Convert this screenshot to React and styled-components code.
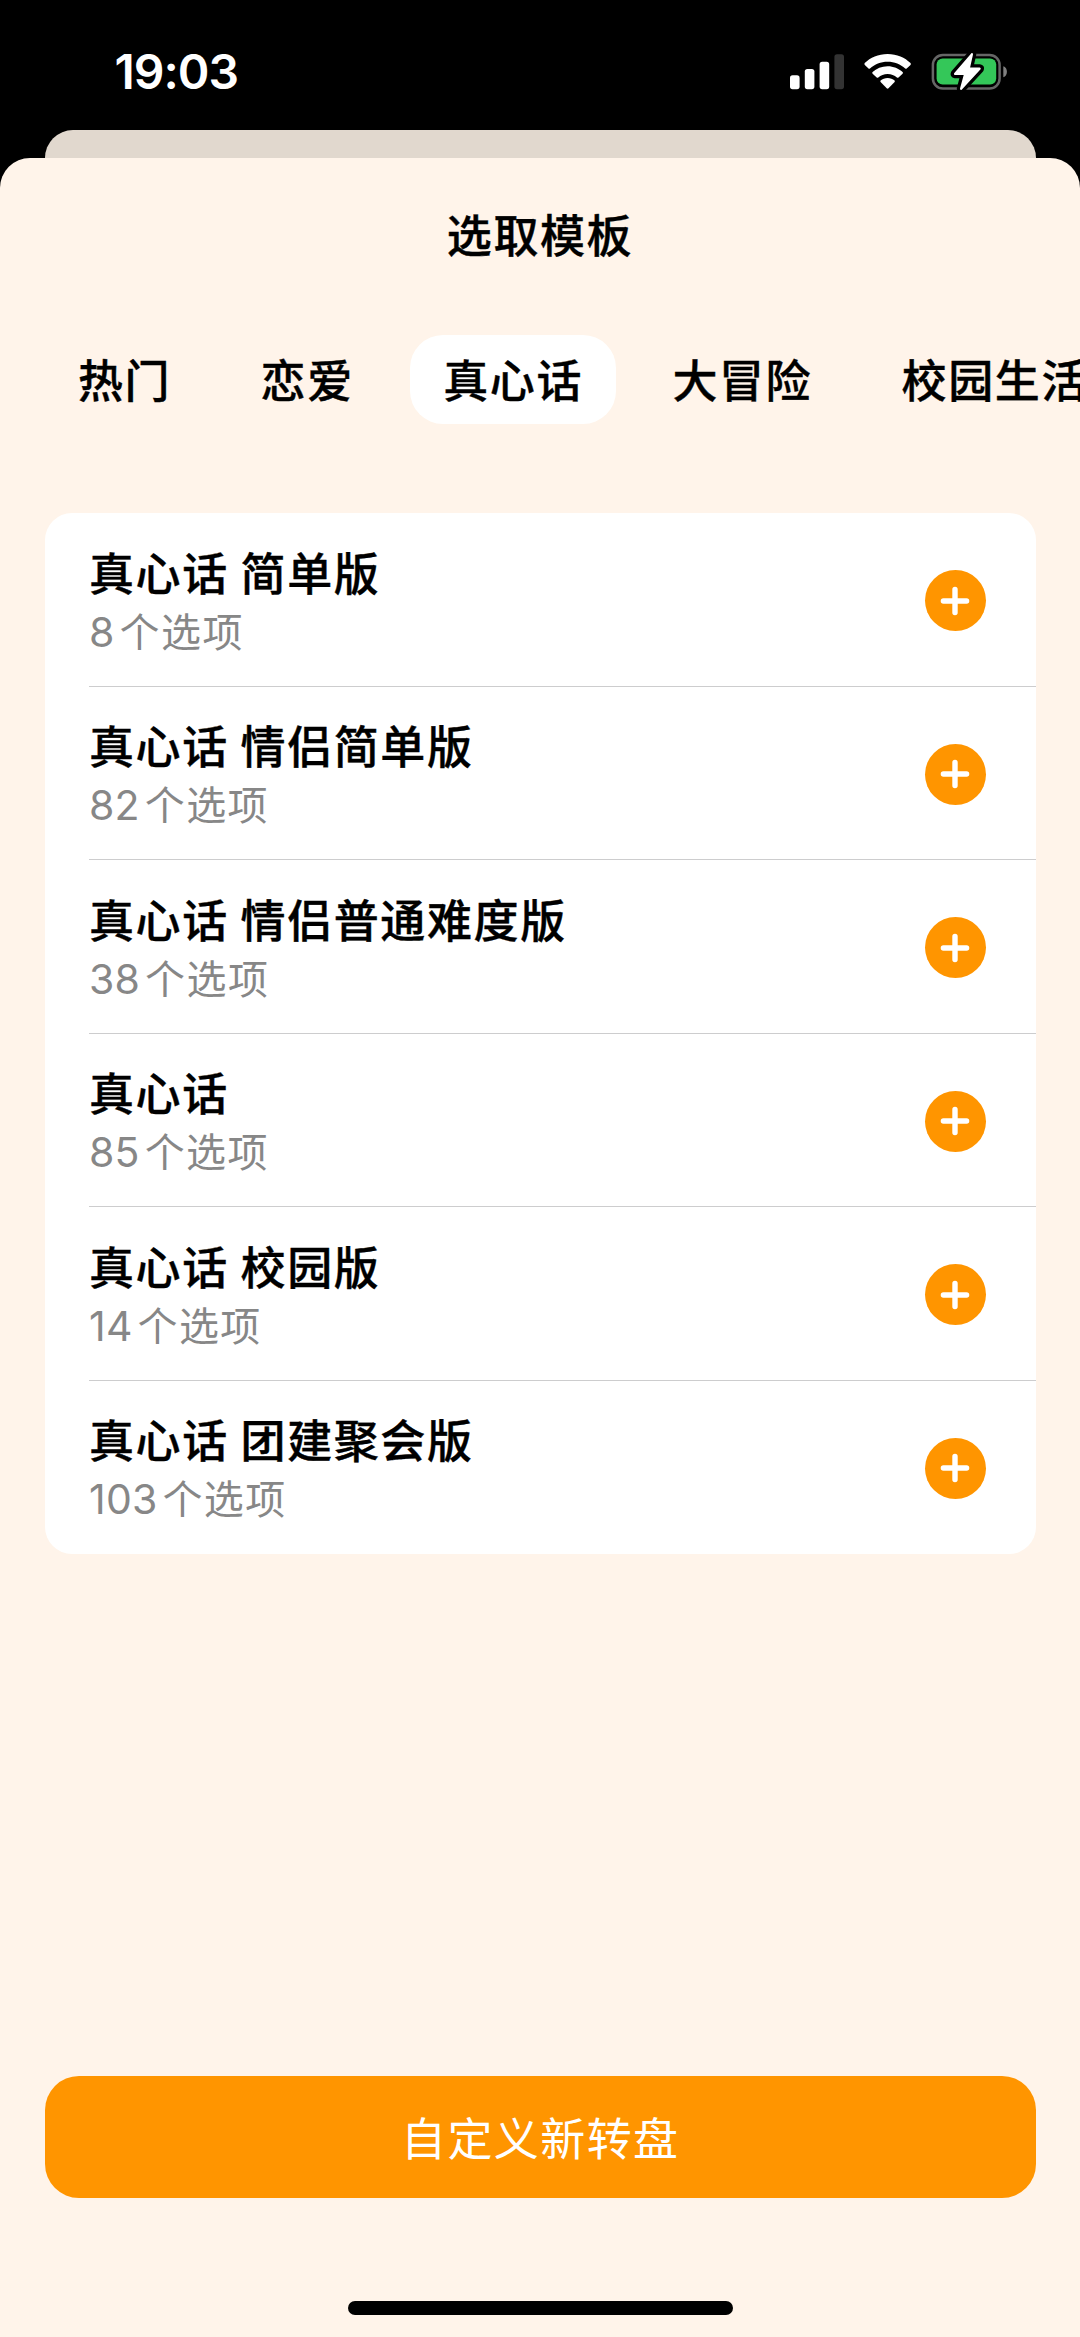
import React, { useState } from "react";
import styled, { createGlobalStyle } from "styled-components";

const TABS = ["热门", "恋爱", "真心话", "大冒险", "校园生活"];

const TEMPLATES = [
    { title: "真心话 简单版", count: 8 },
    { title: "真心话 情侣简单版", count: 82 },
    { title: "真心话 情侣普通难度版", count: 38 },
    { title: "真心话", count: 85 },
    { title: "真心话 校园版", count: 14 },
    { title: "真心话 团建聚会版", count: 103 },
];

function SignalIcon() {
    return (
        <svg width="55" height="36" viewBox="790 54 55 36" fill="#fff">
            <rect x="790" y="75.3" width="9.6" height="13.9" rx="2.6" />
            <rect x="804.8" y="69" width="9.6" height="20.2" rx="2.6" />
            <rect x="819.6" y="61.8" width="9.6" height="27.4" rx="2.6" />
            <rect x="834.4" y="54.2" width="9.6" height="35" rx="2.6" fill="#333" />
        </svg>
    );
}

function WifiIcon() {
    return (
        <svg width="48" height="36" viewBox="864 54 48 36" fill="#fff">
            <path d="M887.6 54C896.9 54 905 57.6 910.5 63.1Q911.3 64 910.5 64.9L906.7 68.5Q906 69.2 905.2 68.5C900.6 64.2 894.5 61.7 887.6 61.7S874.6 64.2 870 68.5Q869.2 69.2 868.5 68.5L864.8 64.9Q864 64 864.7 63.1C870.3 57.6 878.3 54 887.6 54Z" />
            <path d="M887.6 66.2C893.5 66.2 898.8 68.4 902.6 72Q903.4 72.9 902.6 73.7L898.5 77.5Q897.7 78.2 896.9 77.5C894.5 75.2 891.2 73.9 887.6 73.9S880.7 75.2 878.3 77.5Q877.5 78.2 876.7 77.5L872.6 73.7Q871.8 72.9 872.6 72C876.4 68.4 881.7 66.2 887.6 66.2Z" />
            <path d="M887.6 78C890.3 78 892.8 79 894.6 80.6Q895.2 81.3 894.6 82L888.5 88.2Q887.6 89.1 886.7 88.2L880.6 82Q880 81.3 880.6 80.6C882.4 79 884.9 78 887.6 78Z" />
        </svg>
    );
}

function BatteryIcon() {
    const bolt = "M971.6 53.1L954.1 73.2Q953.3 74.7 955 74.9H963.7L960 88.5Q960 90.6 961.7 89.7L980.6 69.2Q981.3 67.6 979.6 67.4H970.1L973 54.6Q973.1 52.5 971.6 53.1Z";
    return (
        <svg width="77" height="42" viewBox="931 51 77 42">
            <rect x="932.9" y="54.9" width="66.7" height="33.7" rx="10" fill="none" stroke="#666" strokeWidth="2.5" />
            <path d="M1003.3 66.3C1008.1 67.6 1008.1 75.9 1003.3 77.2Z" fill="#808080" />
            <rect x="936.6" y="58.6" width="59.6" height="26" rx="6" fill="#34c759" />
            <path d={bolt} fill="#000" stroke="#000" strokeWidth="6.5" strokeLinejoin="round" />
            <path d={bolt} fill="#fff" />
        </svg>
    );
}

function App() {
    const [activeTab, setActiveTab] = useState("真心话");

    return (
        <Screen>
            <GlobalStyle />
            <StatusBar>
                <Time>19:03</Time>
                <StatusIcons>
                    <SignalIcon />
                    <WifiIcon />
                    <BatteryIcon />
                </StatusIcons>
            </StatusBar>
            <BackSheet />
            <Sheet>
                <Title>选取模板</Title>
                <Tabs>
                    {TABS.map((tab) => (
                        <Tab key={tab} $active={tab === activeTab} onClick={() => setActiveTab(tab)}>
                            {tab}
                        </Tab>
                    ))}
                </Tabs>
                <List>
                    {TEMPLATES.map((item) => (
                        <Row key={item.title}>
                            <RowBody>
                                <RowText>
                                    <RowTitle>{item.title}</RowTitle>
                                    <RowCount>
                                        <Digits>{item.count}</Digits>个选项
                                    </RowCount>
                                </RowText>
                                <AddButton aria-label="add">
                                    <svg width="30" height="30" viewBox="0 0 30 30" stroke="#fff" strokeWidth="5.4" strokeLinecap="round">
                                        <path d="M15 3.4V26.6M3.4 15H26.6" />
                                    </svg>
                                </AddButton>
                            </RowBody>
                        </Row>
                    ))}
                </List>
                <Footer>
                    <CustomButton>自定义新转盘</CustomButton>
                    <HomeIndicator />
                </Footer>
            </Sheet>
        </Screen>
    );
}

export default App;

const GlobalStyle = createGlobalStyle`
    * {
        box-sizing: border-box;
    }
    body {
        margin: 0;
        background-color: #000;
        font-family: "Noto Sans CJK SC", sans-serif;
    }
    button {
        font-family: inherit;
        border: none;
        padding: 0;
        cursor: pointer;
    }
    svg {
        display: block;
    }
`;
const Screen = styled.div`
    width: 1080px;
    height: 2337px;
    display: flex;
    flex-direction: column;
    background-color: #000;
    overflow: hidden;
`;
const StatusBar = styled.div`
    height: 130px;
    flex-shrink: 0;
    display: flex;
    align-items: flex-start;
    justify-content: space-between;
    padding: 51px 72px 0 114.5px;
`;
const Time = styled.div`
    font-family: Inter, sans-serif;
    font-size: 48px;
    line-height: 42px;
    font-weight: 600;
    letter-spacing: -1px;
    color: #fff;
`;
const StatusIcons = styled.div`
    height: 42px;
    display: flex;
    align-items: center;
    gap: 19px;
`;
const BackSheet = styled.div`
    height: 60px;
    flex-shrink: 0;
    margin: 0 44.5px 0 45px;
    border-radius: 28px 28px 0 0;
    background-color: #e1d8ce;
`;
const Sheet = styled.div`
    flex: 1;
    margin-top: -32px;
    display: flex;
    flex-direction: column;
    background-color: #fff4ea;
    border-radius: 30px 30px 0 0;
`;
const Title = styled.h1`
    margin: 42px 0 0;
    font-size: 45px;
    line-height: 68px;
    font-weight: 500;
    letter-spacing: 1.6px;
    text-align: center;
    -webkit-text-stroke: 0.4px #000;
`;
const Tabs = styled.div`
    display: flex;
    gap: 23.4px;
    margin-top: 67px;
    padding-left: 45px;
    overflow: hidden;
`;
const Tab = styled.button`
    height: 89px;
    flex-shrink: 0;
    padding: 0 33px 2px;
    border-radius: 33px;
    background-color: ${(props) => (props.$active ? "#fff" : "transparent")};
    color: #000;
    font-size: 45px;
    font-weight: 500;
    letter-spacing: 1.6px;
    white-space: nowrap;
    -webkit-text-stroke: 0.4px #000;
`;
const List = styled.div`
    margin: 89px 44.5px 0 45px;
    border-radius: 27px;
    background-color: #fff;
    overflow: hidden;
`;
const Row = styled.div`
    height: 173.5px;
    padding-left: 44px;
`;
const RowBody = styled.div`
    height: 100%;
    display: flex;
    align-items: center;
    justify-content: space-between;
    padding: 2.5px 50px 0 0;
    border-bottom: 1px solid #cdcdce;
    ${Row}:last-child & {
        border-bottom-color: transparent;
    }
`;
const RowText = styled.div`
    display: flex;
    flex-direction: column;
`;
const RowTitle = styled.div`
    font-size: 45px;
    line-height: 60px;
    font-weight: 500;
    letter-spacing: 1.6px;
    color: #000;
    -webkit-text-stroke: 0.4px #000;
`;
const RowCount = styled.div`
    font-size: 40px;
    line-height: 56px;
    font-weight: 400;
    letter-spacing: 1.4px;
    color: #878787;
`;
const Digits = styled.span`
    font-family: Inter, sans-serif;
    font-size: 41px;
    letter-spacing: 0.2px;
    margin-right: 5px;
`;
const AddButton = styled.button`
    width: 61px;
    height: 61px;
    display: grid;
    place-items: center;
    border-radius: 50%;
    background-color: #ff9500;
`;
const Footer = styled.div`
    margin-top: auto;
    display: flex;
    flex-direction: column;
    align-items: center;
    padding: 0 44.5px 22px 45px;
`;
const CustomButton = styled.button`
    width: 100%;
    height: 122px;
    padding-bottom: 2px;
    border-radius: 34px;
    background-color: #ff9500;
    color: #fff;
    font-size: 45px;
    font-weight: 400;
    letter-spacing: 1.4px;
`;
const HomeIndicator = styled.div`
    width: 385px;
    height: 14px;
    margin-top: 103px;
    border-radius: 7px;
    background-color: #000;
`;
